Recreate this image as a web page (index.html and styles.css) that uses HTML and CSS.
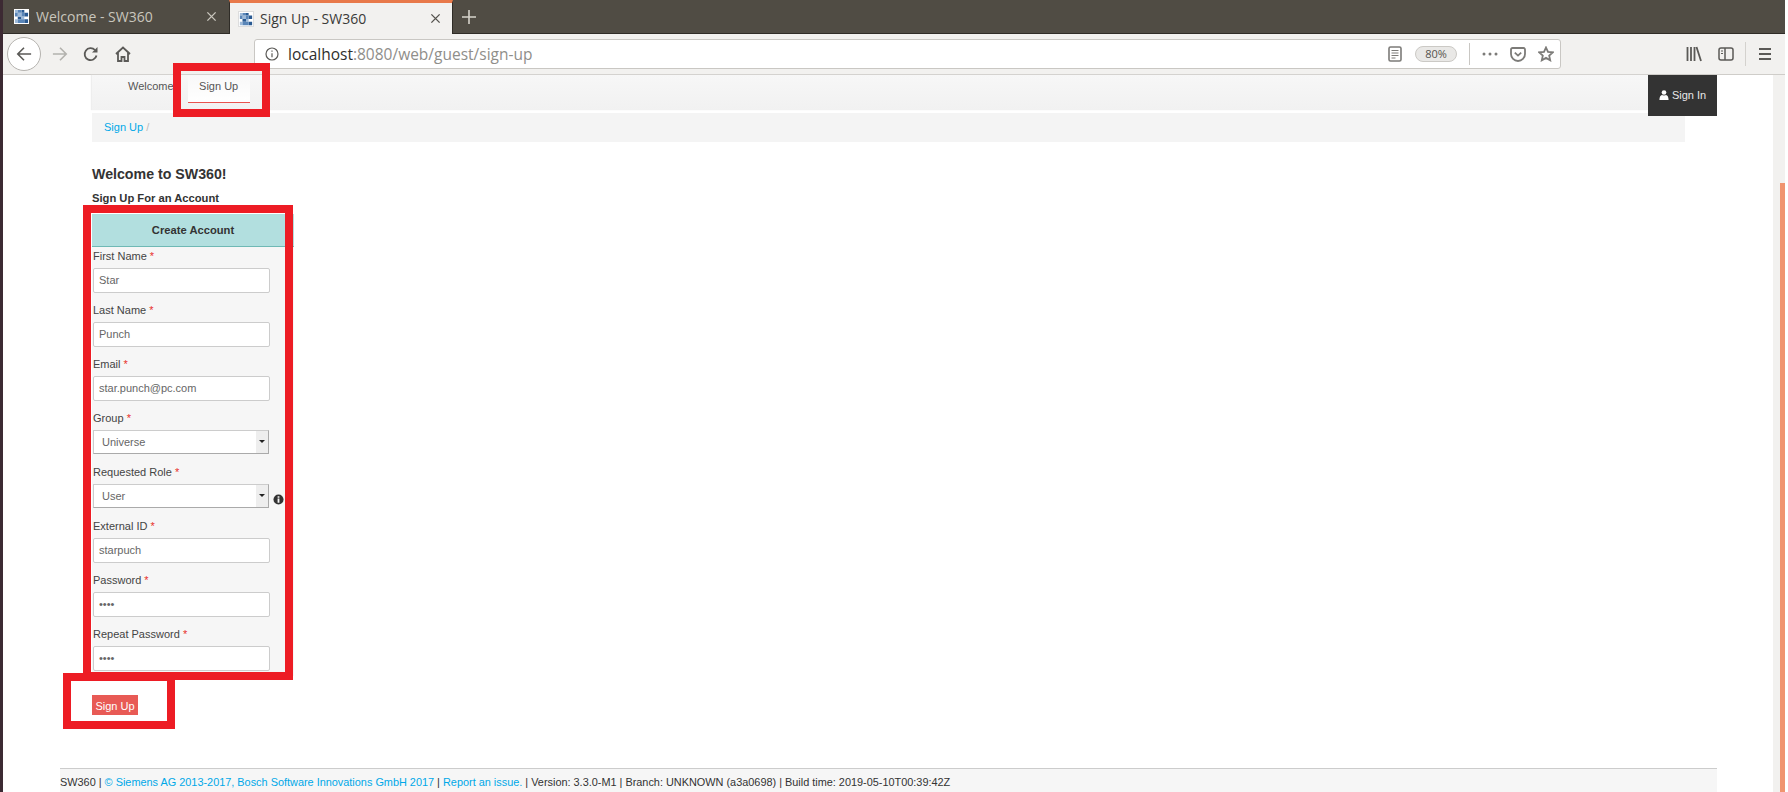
FILE: index.html
```html
<!DOCTYPE html>
<html lang="en">
<head>
    <meta charset="UTF-8">
    <title>Sign Up - SW360</title>
    <link rel="stylesheet" href="styles.css">
</head>
<body>
    <div class="window">
        <div class="tabbar">
            <div class="tab">
                <svg class="favicon" viewBox="0 0 16 16"><rect width="16" height="16" fill="#fff"/><path fill="#2a5a92" d="M8 1h3v3H8zM11 4h4v4h-4zM4 8h4v3H4zM11 11h4v4h-4z"/><path fill="#9db9d8" d="M1 1h3v3H1zM4 4h4v4H4zM8 8h3v3H8zM1 11h3v4H1z"/><path fill="#5a86b8" d="M4 1h4v3H4zM1 4h3v4H1zM8 4h3v4H8zM4 11h4v4H4zM8 11h3v4H8z"/></svg>
                <span class="tab-title">Welcome - SW360</span>
                <svg class="tab-close" viewBox="0 0 12 12"><path d="M1.500 1.500l9 9M10.500 1.500l-9 9"/></svg>
            </div>
            <div class="tab tab-active">
                <svg class="favicon" viewBox="0 0 16 16"><rect width="16" height="16" fill="#fff"/><path fill="#2a5a92" d="M8 1h3v3H8zM11 4h4v4h-4zM4 8h4v3H4zM11 11h4v4h-4z"/><path fill="#9db9d8" d="M1 1h3v3H1zM4 4h4v4H4zM8 8h3v3H8zM1 11h3v4H1z"/><path fill="#5a86b8" d="M4 1h4v3H4zM1 4h3v4H1zM8 4h3v4H8zM4 11h4v4H4zM8 11h3v4H8z"/></svg>
                <span class="tab-title">Sign Up - SW360</span>
                <svg class="tab-close" viewBox="0 0 12 12"><path d="M1.500 1.500l9 9M10.500 1.500l-9 9"/></svg>
            </div>
            <svg class="tab-new" viewBox="0 0 14 14"><path d="M7 0v14M0 7h14"/></svg>
        </div>

        <div class="toolbar">
            <div class="back-button">
                <svg class="tool-icon" viewBox="0 0 18 18"><path d="M17 9H2M9 2L2 9l7 7"/></svg>
            </div>
            <svg class="tool-icon forward" viewBox="0 0 18 18"><path d="M1 9h15M9 2l7 7-7 7"/></svg>
            <svg class="tool-icon reload" viewBox="0 0 16 16"><path d="M13.500 9.500A6 6 0 1 1 12 4"/><path class="solid" d="M14.500 1v5.500H9z"/></svg>
            <svg class="tool-icon home" viewBox="0 0 16 16"><path d="M1 8l7-6.500L15 8M3 6.500V15h3.500v-4h3v4H13V6.500"/></svg>
            <div class="urlbar">
                <svg class="tool-icon info" viewBox="0 0 14 14"><circle cx="7" cy="7" r="6"/><path d="M7 6.200v4M7 3.400v1.400"/></svg>
                <span class="url"><span class="url-host">localhost</span>:8080/web/guest/sign-up</span>
                <svg class="tool-icon reader" viewBox="0 0 14 16"><rect x="1" y="1" width="12" height="14" rx="1.500"/><path class="thin" d="M3.500 4.500h7M3.500 7h7M3.500 9.500h7M3.500 12h4"/></svg>
                <span class="zoom-pill">80%</span>
                <span class="url-sep"></span>
                <svg class="tool-icon dots" viewBox="0 0 16 4"><circle class="solid" cx="2" cy="2" r="1.500"/><circle class="solid" cx="8" cy="2" r="1.500"/><circle class="solid" cx="14" cy="2" r="1.500"/></svg>
                <svg class="tool-icon pocket" viewBox="0 0 16 15"><path d="M2.500 1h11A1.500 1.500 0 0 1 15 2.500V7A7 7 0 0 1 1 7V2.500A1.500 1.500 0 0 1 2.500 1z"/><path d="M4.800 5.600L8 8.600l3.200-3"/></svg>
                <svg class="tool-icon star" viewBox="0 0 16 16"><path d="M8 1.500l2 4.400 4.800.5-3.600 3.200 1 4.700L8 11.900l-4.200 2.400 1-4.700L1.200 6.400l4.800-.5z"/></svg>
            </div>
            <svg class="tool-icon library" viewBox="0 0 16 16"><path d="M1.500 1v14M5 1v14M8.500 1v14M10.500 1l4.500 14"/></svg>
            <svg class="tool-icon sidebar" viewBox="0 0 16 14"><rect x="1" y="1" width="14" height="12" rx="2"/><path d="M7 1v12"/><path class="thin" d="M3 4h2M3 6.500h2"/></svg>
            <span class="toolbar-sep"></span>
            <svg class="tool-icon menu" viewBox="0 0 12 12"><path d="M0 1h12M0 6h12M0 11h12"/></svg>
        </div>

        <div class="viewport">
            <div class="page">
                <div class="container">
                    <div class="header-row">
                        <div class="nav">
                            <a class="nav-item">Welcome</a>
                            <a class="nav-item nav-active">Sign Up</a>
                        </div>
                        <a class="sign-in">
                            <svg class="user-icon" viewBox="0 0 12 12"><circle cx="6" cy="3" r="2.800"/><path d="M0.500 12c0-3.800 1.500-5.800 3-6 1 .8 4 .8 5 0 1.500.2 3 2.200 3 6z"/></svg>
                            Sign In
                        </a>
                    </div>
                    <div class="breadcrumb"><a class="link">Sign Up</a> <span class="crumb-sep">/</span></div>

                    <h1>Welcome to SW360!</h1>
                    <h2>Sign Up For an Account</h2>

                    <form class="account-form">
                        <div class="form-title">Create Account</div>
                        <div class="form-body">
                            <div class="form-row">
                                <label>First Name <span class="required">*</span></label>
                                <input type="text" value="Star">
                            </div>
                            <div class="form-row">
                                <label>Last Name <span class="required">*</span></label>
                                <input type="text" value="Punch">
                            </div>
                            <div class="form-row">
                                <label>Email <span class="required">*</span></label>
                                <input type="text" value="star.punch@pc.com">
                            </div>
                            <div class="form-row">
                                <label>Group <span class="required">*</span></label>
                                <div class="select"><span>Universe</span><span class="select-arrow"></span></div>
                            </div>
                            <div class="form-row">
                                <label>Requested Role <span class="required">*</span></label>
                                <div class="select-line">
                                    <div class="select"><span>User</span><span class="select-arrow"></span></div>
                                    <svg class="info-icon" viewBox="0 0 12 12"><circle cx="6" cy="6" r="5.500"/><path d="M5 2.500h2v1.600H5zM5 5h2v4.500H5z"/></svg>
                                </div>
                            </div>
                            <div class="form-row">
                                <label>External ID <span class="required">*</span></label>
                                <input type="text" value="starpuch">
                            </div>
                            <div class="form-row">
                                <label>Password <span class="required">*</span></label>
                                <input type="password" value="star">
                            </div>
                            <div class="form-row form-row-last">
                                <label>Repeat Password <span class="required">*</span></label>
                                <input type="password" value="star">
                            </div>
                        </div>
                        <button type="button" class="submit">Sign Up</button>
                    </form>

                    <div class="footer">
                        SW360 | <a class="link">© Siemens AG 2013-2017, Bosch Software Innovations GmbH 2017</a> | <a class="link">Report an issue.</a> | Version: 3.3.0-M1 | Branch: UNKNOWN (a3a0698) | Build time: 2019-05-10T00:39:42Z
                    </div>
                </div>
            </div>
            <div class="scrollbar"><div class="scroll-thumb"></div></div>
        </div>
    </div>

    <div class="mark mark-nav"></div>
    <div class="mark mark-form"></div>
    <div class="mark mark-submit"></div>
</body>
</html>
```

FILE: styles.css
```css
* {
  box-sizing: border-box;
}

html,
body {
  height: 100%;
  margin: 0;
}

body {
  position: relative;
  height: 792px;
  overflow: hidden;
  padding-right: 3px;
  background-color: #fff;
  border-left: 3px solid #3c2a33;
  font-family: "Liberation Sans", Arial, sans-serif;
  font-size: 11px;
  color: #333;
}

.window {
  display: flex;
  flex-direction: column;
  height: 100%;
}

/* browser chrome */
.tabbar {
  display: flex;
  align-items: center;
  flex-shrink: 0;
  height: 34px;
  background-color: #504c44;
  border-bottom: 1px solid #2f2c27;
  font-family: "Open Sans", "Noto Sans", sans-serif;
  font-size: 14px;
}

.tab {
  display: flex;
  align-items: center;
  align-self: stretch;
  width: 226px;
  padding: 0 12px 0 11px;
  color: #c9c6bd;
}

.tab-active {
  width: 224px;
  margin-bottom: -1px;
  padding: 0 11px 0 8px;
  background-color: #f2f1ef;
  border-top: 3px solid #e8794a;
  border-left: 1px solid #2f2c27;
  border-right: 1px solid #2f2c27;
  color: #3a3a38;
}

.favicon {
  flex-shrink: 0;
  width: 15px;
  height: 15px;
  margin-right: 7px;
}

.tab-active .favicon {
  width: 16px;
  height: 16px;
  margin-right: 6px;
  border: 1px solid #ddd;
}

.tab-title {
  flex: 1;
  white-space: nowrap;
}

.tab-close {
  width: 11px;
  height: 11px;
  fill: none;
  stroke: #c9c6bd;
  stroke-width: 1.500;
}

.tab-active .tab-close {
  stroke: #55534e;
}

.tab-new {
  width: 14px;
  height: 14px;
  margin-left: 9px;
  fill: none;
  stroke: #d6d3cb;
  stroke-width: 1.600;
}

.toolbar {
  display: flex;
  align-items: center;
  flex-shrink: 0;
  height: 41px;
  padding-left: 4px;
  background-color: #f2f1ef;
  border-bottom: 1px solid #cfcdc9;
}

.tool-icon {
  flex-shrink: 0;
  fill: none;
  stroke: #5b5a57;
  stroke-width: 1.800;
}

.tool-icon .solid {
  fill: #5b5a57;
  stroke: none;
}

.tool-icon .thin {
  stroke-width: 1;
}

.back-button {
  display: flex;
  align-items: center;
  justify-content: center;
  flex-shrink: 0;
  width: 34px;
  height: 34px;
  background-color: #fff;
  border: 1px solid #b5b3af;
  border-radius: 50%;
}

.back-button .tool-icon {
  width: 16px;
  height: 16px;
}

.forward {
  width: 16px;
  height: 16px;
  margin-left: 11px;
  stroke: #b3b2ae;
}

.reload {
  width: 16px;
  height: 16px;
  margin-left: 15px;
}

.home {
  width: 16px;
  height: 16px;
  margin-left: 16px;
}

.urlbar {
  display: flex;
  align-items: center;
  flex-shrink: 0;
  width: 1307px;
  height: 30px;
  margin-left: 123px;
  padding: 0 6px 0 10px;
  background-color: #fff;
  border: 1px solid #c9c7c3;
  border-radius: 3px;
  font-family: "Open Sans", "Noto Sans", sans-serif;
  font-size: 15.500px;
}

.info {
  width: 14px;
  height: 14px;
  stroke-width: 1.200;
}

.url {
  flex: 1;
  margin-left: 9px;
  color: #8f8e8a;
  white-space: nowrap;
}

.url-host {
  color: #2e2e2c;
}

.reader {
  width: 14px;
  height: 16px;
  stroke: #7c7b78;
  stroke-width: 1.600;
}

.zoom-pill {
  width: 42px;
  height: 16px;
  margin-left: 13px;
  background-color: #e9e8e6;
  border: 1px solid #cbc9c5;
  border-radius: 8px;
  font-size: 11px;
  line-height: 14px;
  text-align: center;
  color: #55534e;
}

.url-sep {
  width: 1px;
  height: 22px;
  margin-left: 12px;
  background-color: #c9c7c3;
}

.dots {
  width: 16px;
  height: 4px;
  margin-left: 12px;
}

.star,
.pocket {
  stroke: #7c7b78;
}

.tool-icon.dots .solid {
  fill: #7c7b78;
}

.pocket {
  width: 16px;
  height: 15px;
  margin-left: 12px;
}

.star {
  width: 16px;
  height: 16px;
  margin-left: 12px;
}

.library {
  width: 16px;
  height: 16px;
  margin-left: 125px;
}

.sidebar {
  width: 16px;
  height: 14px;
  margin-left: 16px;
  stroke-width: 1.500;
}

.toolbar-sep {
  width: 1px;
  height: 24px;
  margin-left: 11px;
  background-color: #d4d2ce;
}

.menu {
  width: 12px;
  height: 12px;
  margin-left: 13px;
}

/* page */
.viewport {
  display: flex;
  flex: 1;
  min-height: 0;
}

.page {
  flex: 1;
  min-width: 0;
  padding-left: 57px;
}

.scrollbar {
  flex-shrink: 0;
  width: 12px;
  padding-top: 108px;
  padding-left: 7px;
  background-color: #f2f1ef;
}

.scroll-thumb {
  height: 100%;
  background-color: #f0946f;
}

.container {
  display: flex;
  flex-direction: column;
  width: 1657px;
  height: 100%;
}

.header-row {
  display: flex;
  height: 35px;
  margin-left: 32px;
}

.nav {
  display: flex;
  flex: 1;
  padding-left: 36px;
  background: linear-gradient(#f7f7f7, #f1f1f1);
  box-shadow: -1px 0 1px #eee;
}

.nav-item {
  padding-top: 5px;
  color: #555;
  line-height: 13px;
}

.nav-active {
  width: 62px;
  height: 28px;
  margin-left: 14px;
  background: linear-gradient(#f8f8f8, #fff);
  border-bottom: 1px solid #e8534f;
  text-align: center;
}

.sign-in {
  position: relative;
  z-index: 1;
  display: flex;
  align-items: center;
  justify-content: center;
  width: 69px;
  height: 41px;
  padding-bottom: 2px;
  background-color: #333;
  color: #e8e8e8;
}

.user-icon {
  width: 10px;
  height: 10px;
  margin-right: 3px;
  fill: #fff;
}

.breadcrumb {
  width: 1593px;
  height: 29px;
  margin: 3px 0 0 32px;
  padding-left: 12px;
  background-color: #f4f4f4;
  line-height: 29px;
}

.link {
  color: #00a8e8;
}

.crumb-sep {
  color: #bbb;
}

h1 {
  margin: 22px 0 0 32px;
  font-size: 14.200px;
  line-height: 20px;
  color: #333;
}

h2 {
  margin: 7px 0 0 32px;
  font-size: 11.200px;
  line-height: 14px;
  color: #333;
}

.account-form {
  width: 202px;
  margin: 9px 0 0 32px;
}

.form-title {
  height: 33px;
  background-color: #b2dfdf;
  border-bottom: 1px solid #6fb9b5;
  font-size: 11.200px;
  font-weight: bold;
  line-height: 32px;
  text-align: center;
}

.form-body {
  height: 429px;
  padding: 2px 0 0 1px;
  background-color: #f6f6f6;
}

.form-row {
  height: 54px;
}

.form-row-last {
  height: 46px;
}

label {
  display: block;
  height: 19px;
  line-height: 14px;
  color: #444;
}

.required {
  color: #e8302c;
}

input {
  display: block;
  width: 177px;
  height: 25px;
  padding: 0 5px 2px;
  background-color: #fff;
  border: 1px solid #ccc;
  border-radius: 2px;
  font-family: "Liberation Sans", Arial, sans-serif;
  font-size: 11px;
  color: #666;
}

.select-line {
  display: flex;
}

.select {
  display: flex;
  justify-content: space-between;
  flex-shrink: 0;
  width: 176px;
  height: 24px;
  padding-left: 8px;
  background-color: #fff;
  border: 1px solid #ccc;
  border-right-color: #aaa;
  border-bottom-color: #aaa;
  line-height: 22px;
  color: #666;
}

.select-arrow {
  position: relative;
  width: 12px;
  background-color: #eee;
}

.select-arrow::after {
  content: "";
  position: absolute;
  top: 9px;
  left: 3px;
  border: 3px solid transparent;
  border-top: 3px solid #222;
  border-bottom: none;
}

.info-icon {
  width: 11px;
  height: 11px;
  margin: 10px 0 0 4px;
  fill: #333;
}

.info-icon path {
  fill: #f6f6f6;
}

.submit {
  display: block;
  width: 46px;
  height: 20px;
  margin-top: 19px;
  padding: 2px 0 0;
  background-color: #e85a55;
  border: none;
  font-family: "Liberation Sans", Arial, sans-serif;
  font-size: 11px;
  color: #fff;
}

.footer {
  height: 24px;
  margin-top: auto;
  background-color: #f6f6f6;
  border-top: 1px solid #ccc;
  font-size: 10.900px;
  line-height: 26px;
  color: #333;
  white-space: nowrap;
}

/* red annotation boxes drawn over the screenshot */
.mark {
  position: absolute;
  border: 8px solid #ed1c24;
}

.mark-nav {
  left: 170px;
  top: 63px;
  width: 97px;
  height: 54px;
}

.mark-form {
  left: 80px;
  top: 205px;
  width: 210px;
  height: 475px;
}

.mark-submit {
  left: 60px;
  top: 673px;
  width: 112px;
  height: 56px;
}
```
